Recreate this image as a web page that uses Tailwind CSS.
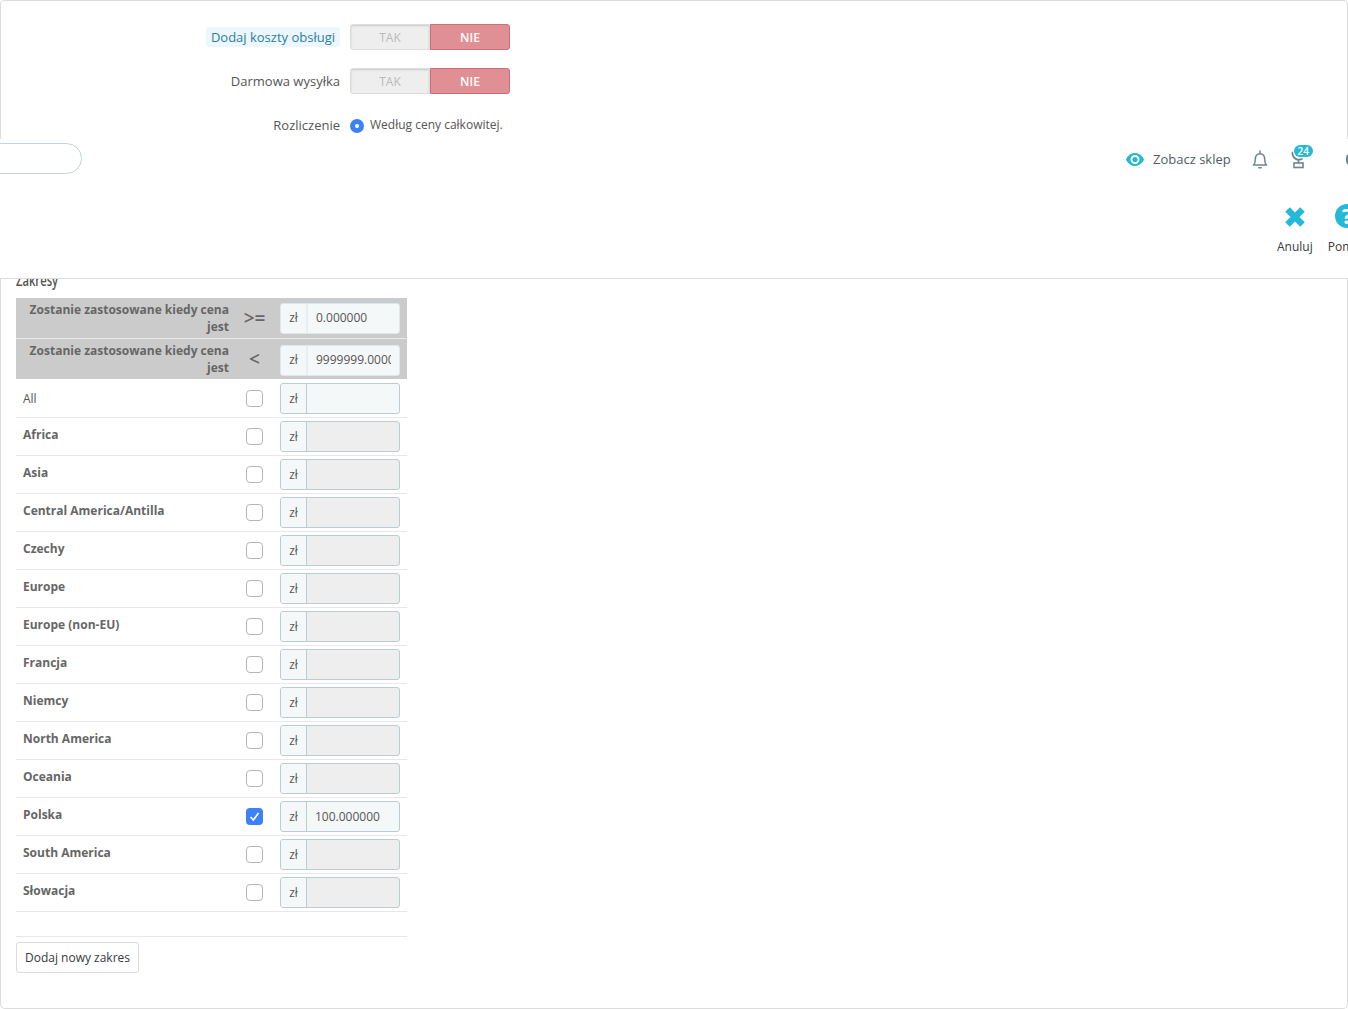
<!doctype html>
<html lang="en">
  <head>
    <title>Zakresy</title>
    <meta charset="UTF-8" />
    <script src="https://cdn.jsdelivr.net/npm/@tailwindcss/browser@4"></script>
  </head>
  <body class="h-[1009px] w-[1348px] overflow-hidden bg-white font-['Open_Sans',sans-serif] text-[#555]">
    <!-- Form, top part -->
    <div class="h-[139px] rounded-t-[5px] border-x border-t border-[#dcdcdc] pt-[22px]">
      <div class="flex h-[28px] items-center">
        <div class="flex w-[339px] justify-end">
          <span class="rounded-[3px] bg-[#ecf6fb] px-[5px] text-[13px] leading-[20px] text-[#2a7fa8]">Dodaj koszty obsługi</span>
        </div>
        <div class="ml-[10px] flex h-[26px] w-[160px] text-[12px] font-semibold">
          <div class="flex w-[80px] items-center justify-center rounded-l-[3px] border border-[#dddddd] bg-[#eeeeee] pt-[2px] font-normal text-[#bbbbbb] shadow-[inset_0_1px_2px_rgba(0,0,0,0.15)]">TAK</div>
          <div class="flex w-[80px] items-center justify-center rounded-r-[3px] border border-[#cd6f76] bg-[#e08f95] pt-[2px] text-white">NIE</div>
        </div>
      </div>
      <div class="mt-[16px] flex h-[28px] items-center">
        <div class="flex w-[339px] justify-end">
          <span class="text-[13px] leading-[20px]">Darmowa wysyłka</span>
        </div>
        <div class="ml-[10px] flex h-[26px] w-[160px] text-[12px] font-semibold">
          <div class="flex w-[80px] items-center justify-center rounded-l-[3px] border border-[#dddddd] bg-[#eeeeee] pt-[2px] font-normal text-[#bbbbbb] shadow-[inset_0_1px_2px_rgba(0,0,0,0.15)]">TAK</div>
          <div class="flex w-[80px] items-center justify-center rounded-r-[3px] border border-[#cd6f76] bg-[#e08f95] pt-[2px] text-white">NIE</div>
        </div>
      </div>
      <div class="mt-[20px] flex items-start">
        <div class="w-[339px] pt-[1px] text-right text-[13px] leading-[18px]">Rozliczenie</div>
        <div class="mt-[4px] ml-[10px] flex size-[14px] items-center justify-center rounded-full bg-[#3b82f6]">
          <div class="size-[4px] rounded-full bg-white"></div>
        </div>
        <span class="ml-[6px] pt-[1px] text-[12px] leading-[18px]">Według ceny całkowitej.</span>
      </div>
    </div>

    <!-- Sticky header over the form -->
    <div class="relative h-[140px] overflow-hidden border-b border-[#dcdcdc] bg-white">
      <div class="mt-[4px] -ml-[20px] h-[31px] w-[102px] rounded-full border border-[#c5d3d8]"></div>
      <div class="absolute top-[10px] left-[1126px] flex w-[240px] items-center">
        <svg class="h-[13px] w-[18px]" viewBox="0 0 18 13"><path fill="#25b9d7" fill-rule="evenodd" d="M9 0C5 0 1.700 2.600 0 6.500 1.700 10.400 5 13 9 13s7.300-2.600 9-6.500C16.300 2.600 13 0 9 0zm0 11a4.500 4.500 0 1 1 0-9 4.500 4.500 0 0 1 0 9z"/><circle cx="9" cy="6.500" r="2.600" fill="#25b9d7"/></svg>
        <span class="ml-[9px] text-[13px] leading-[20px] text-[#4f5d63]">Zobacz sklep</span>
        <svg class="ml-[21px] h-[19px] w-[16px]" viewBox="0 0 16 19" fill="none" stroke="#6c868e" stroke-width="1.5"><path d="M1.500 15c1.500-1.300 1.800-3 1.800-5.500C3.300 6 5 3.700 8 3.700s4.700 2.300 4.700 5.800c0 2.500.3 4.200 1.800 5.500z" stroke-linejoin="round"/><path d="M8 1v2.700M6.800 17.800h2.400" stroke-linecap="round"/></svg>
        <div class="relative ml-[22px] h-[20px] w-[17px]">
          <svg class="h-[20px] w-[17px]" viewBox="0 0 17 20"><path fill="#6c868e" d="M1.800 2.500C.8 7 3.500 11 8 11.500c2 .2 3.700-.4 5-1.500l-1-1c-1 .6-2.200.9-3.500.7C5 9.200 3 6.500 3.200 3z"/><path fill="none" stroke="#6c868e" stroke-width="1.600" d="M8.500 11v3"/><rect x="4" y="14" width="9" height="4.500" fill="none" stroke="#6c868e" stroke-width="1.600"/></svg>
          <span class="absolute -top-[4px] left-[4px] flex h-[12px] w-[19px] items-center justify-center rounded-full bg-[#25b9d7] text-[10px] leading-none font-semibold text-white">24</span>
        </div>
        <div class="ml-[39px] h-[11px] w-[8px] rounded-full border-2 border-[#6c868e]"></div>
      </div>
      <div class="absolute top-[65px] left-[1277px] flex w-[110px] gap-[15px] text-[12px] leading-[18px] text-[#363a41]">
        <div class="flex flex-col items-center">
          <svg class="mb-[10px] h-[24px] w-[24px]" viewBox="0 0 24 24" fill="none" stroke="#25b9d7" stroke-width="6.500"><path d="M4.500 5.500l15 15M19.500 5.500l-15 15"/></svg>
          <span>Anuluj</span>
        </div>
        <div class="flex flex-col items-center">
          <div class="mb-[10px] flex size-[24px] items-center justify-center rounded-full bg-[#25b9d7] text-[21px] leading-none font-bold text-white">?</div>
          <span>Pomoc</span>
        </div>
      </div>
    </div>

    <!-- Form, ranges -->
    <div class="h-[730px] overflow-hidden rounded-b-[5px] border-x border-b border-[#dcdcdc] pl-[15px]">
      <div class="-mt-[9px] h-[28px] origin-left scale-x-[0.7] text-[16px] leading-[20px] font-semibold text-[#555]">Zakresy</div>
      <div class="w-[391px]">
        <div class="flex h-[41px] items-center border-b border-[#e8e8e8] bg-[#cbcbcb]">
          <div class="w-[213px] text-right text-[12px] leading-[17px] font-bold text-[#666]">Zostanie zastosowane kiedy cena jest</div>
          <div class="w-[51px] text-center text-[19px] font-semibold text-[#666]">&gt;=</div>
          <div class="flex h-[31px] w-[120px] overflow-hidden rounded-[3px] border border-[#dbe8ec] bg-[#f5f8f9] text-[12px]">
            <span class="flex w-[27px] shrink-0 items-center justify-center border-r-2 border-[#e6eff2]">zł</span>
            <input class="w-full min-w-0 bg-transparent px-[8px] text-[12px] text-[#555] outline-none" value="0.000000" readonly />
          </div>
        </div>
        <div class="flex h-[40px] items-center bg-[#cbcbcb]">
          <div class="w-[213px] text-right text-[12px] leading-[17px] font-bold text-[#666]">Zostanie zastosowane kiedy cena jest</div>
          <div class="w-[51px] text-center text-[19px] font-semibold text-[#666]">&lt;</div>
          <div class="mt-[2px] flex h-[31px] w-[120px] overflow-hidden rounded-[3px] border border-[#dbe8ec] bg-[#f5f8f9] text-[12px]">
            <span class="flex w-[27px] shrink-0 items-center justify-center border-r-2 border-[#e6eff2]">zł</span>
            <input class="w-full min-w-0 bg-transparent px-[8px] text-[12px] text-[#555] outline-none" value="9999999.000000" readonly />
          </div>
        </div>

        <div class="mt-[1px] flex h-[38px] border-b border-[#e8e8e8]">
          <div class="w-[230px] pt-[10px] pl-[7px] text-[12px] leading-[18px]">All</div>
          <div class="w-[34px] pt-[10px]"><div class="size-[17px] rounded-[4px] border border-[#b5b5b5] bg-white"></div></div>
          <div class="mt-[3px] flex h-[31px] w-[120px] overflow-hidden rounded-[3px] border border-[#bbcdd2] bg-[#f5f8f9] text-[12px]">
            <span class="flex w-[26px] shrink-0 items-center justify-center border-r border-[#bbcdd2]">zł</span>
          </div>
        </div>
        <div class="flex h-[38px] border-b border-[#e8e8e8]">
          <div class="w-[230px] pt-[8px] pl-[7px] text-[12px] leading-[18px] font-bold text-[#666]">Africa</div>
          <div class="w-[34px] pt-[10px]"><div class="size-[17px] rounded-[4px] border border-[#b5b5b5] bg-white"></div></div>
          <div class="mt-[3px] flex h-[31px] w-[120px] overflow-hidden rounded-[3px] border border-[#bbcdd2] bg-[#eeeeee] text-[12px]">
            <span class="flex w-[26px] shrink-0 items-center justify-center border-r border-[#bbcdd2] bg-[#f5f8f9]">zł</span>
          </div>
        </div>
        <div class="flex h-[38px] border-b border-[#e8e8e8]">
          <div class="w-[230px] pt-[8px] pl-[7px] text-[12px] leading-[18px] font-bold text-[#666]">Asia</div>
          <div class="w-[34px] pt-[10px]"><div class="size-[17px] rounded-[4px] border border-[#b5b5b5] bg-white"></div></div>
          <div class="mt-[3px] flex h-[31px] w-[120px] overflow-hidden rounded-[3px] border border-[#bbcdd2] bg-[#eeeeee] text-[12px]">
            <span class="flex w-[26px] shrink-0 items-center justify-center border-r border-[#bbcdd2] bg-[#f5f8f9]">zł</span>
          </div>
        </div>
        <div class="flex h-[38px] border-b border-[#e8e8e8]">
          <div class="w-[230px] pt-[8px] pl-[7px] text-[12px] leading-[18px] font-bold text-[#666]">Central America/Antilla</div>
          <div class="w-[34px] pt-[10px]"><div class="size-[17px] rounded-[4px] border border-[#b5b5b5] bg-white"></div></div>
          <div class="mt-[3px] flex h-[31px] w-[120px] overflow-hidden rounded-[3px] border border-[#bbcdd2] bg-[#eeeeee] text-[12px]">
            <span class="flex w-[26px] shrink-0 items-center justify-center border-r border-[#bbcdd2] bg-[#f5f8f9]">zł</span>
          </div>
        </div>
        <div class="flex h-[38px] border-b border-[#e8e8e8]">
          <div class="w-[230px] pt-[8px] pl-[7px] text-[12px] leading-[18px] font-bold text-[#666]">Czechy</div>
          <div class="w-[34px] pt-[10px]"><div class="size-[17px] rounded-[4px] border border-[#b5b5b5] bg-white"></div></div>
          <div class="mt-[3px] flex h-[31px] w-[120px] overflow-hidden rounded-[3px] border border-[#bbcdd2] bg-[#eeeeee] text-[12px]">
            <span class="flex w-[26px] shrink-0 items-center justify-center border-r border-[#bbcdd2] bg-[#f5f8f9]">zł</span>
          </div>
        </div>
        <div class="flex h-[38px] border-b border-[#e8e8e8]">
          <div class="w-[230px] pt-[8px] pl-[7px] text-[12px] leading-[18px] font-bold text-[#666]">Europe</div>
          <div class="w-[34px] pt-[10px]"><div class="size-[17px] rounded-[4px] border border-[#b5b5b5] bg-white"></div></div>
          <div class="mt-[3px] flex h-[31px] w-[120px] overflow-hidden rounded-[3px] border border-[#bbcdd2] bg-[#eeeeee] text-[12px]">
            <span class="flex w-[26px] shrink-0 items-center justify-center border-r border-[#bbcdd2] bg-[#f5f8f9]">zł</span>
          </div>
        </div>
        <div class="flex h-[38px] border-b border-[#e8e8e8]">
          <div class="w-[230px] pt-[8px] pl-[7px] text-[12px] leading-[18px] font-bold text-[#666]">Europe (non-EU)</div>
          <div class="w-[34px] pt-[10px]"><div class="size-[17px] rounded-[4px] border border-[#b5b5b5] bg-white"></div></div>
          <div class="mt-[3px] flex h-[31px] w-[120px] overflow-hidden rounded-[3px] border border-[#bbcdd2] bg-[#eeeeee] text-[12px]">
            <span class="flex w-[26px] shrink-0 items-center justify-center border-r border-[#bbcdd2] bg-[#f5f8f9]">zł</span>
          </div>
        </div>
        <div class="flex h-[38px] border-b border-[#e8e8e8]">
          <div class="w-[230px] pt-[8px] pl-[7px] text-[12px] leading-[18px] font-bold text-[#666]">Francja</div>
          <div class="w-[34px] pt-[10px]"><div class="size-[17px] rounded-[4px] border border-[#b5b5b5] bg-white"></div></div>
          <div class="mt-[3px] flex h-[31px] w-[120px] overflow-hidden rounded-[3px] border border-[#bbcdd2] bg-[#eeeeee] text-[12px]">
            <span class="flex w-[26px] shrink-0 items-center justify-center border-r border-[#bbcdd2] bg-[#f5f8f9]">zł</span>
          </div>
        </div>
        <div class="flex h-[38px] border-b border-[#e8e8e8]">
          <div class="w-[230px] pt-[8px] pl-[7px] text-[12px] leading-[18px] font-bold text-[#666]">Niemcy</div>
          <div class="w-[34px] pt-[10px]"><div class="size-[17px] rounded-[4px] border border-[#b5b5b5] bg-white"></div></div>
          <div class="mt-[3px] flex h-[31px] w-[120px] overflow-hidden rounded-[3px] border border-[#bbcdd2] bg-[#eeeeee] text-[12px]">
            <span class="flex w-[26px] shrink-0 items-center justify-center border-r border-[#bbcdd2] bg-[#f5f8f9]">zł</span>
          </div>
        </div>
        <div class="flex h-[38px] border-b border-[#e8e8e8]">
          <div class="w-[230px] pt-[8px] pl-[7px] text-[12px] leading-[18px] font-bold text-[#666]">North America</div>
          <div class="w-[34px] pt-[10px]"><div class="size-[17px] rounded-[4px] border border-[#b5b5b5] bg-white"></div></div>
          <div class="mt-[3px] flex h-[31px] w-[120px] overflow-hidden rounded-[3px] border border-[#bbcdd2] bg-[#eeeeee] text-[12px]">
            <span class="flex w-[26px] shrink-0 items-center justify-center border-r border-[#bbcdd2] bg-[#f5f8f9]">zł</span>
          </div>
        </div>
        <div class="flex h-[38px] border-b border-[#e8e8e8]">
          <div class="w-[230px] pt-[8px] pl-[7px] text-[12px] leading-[18px] font-bold text-[#666]">Oceania</div>
          <div class="w-[34px] pt-[10px]"><div class="size-[17px] rounded-[4px] border border-[#b5b5b5] bg-white"></div></div>
          <div class="mt-[3px] flex h-[31px] w-[120px] overflow-hidden rounded-[3px] border border-[#bbcdd2] bg-[#eeeeee] text-[12px]">
            <span class="flex w-[26px] shrink-0 items-center justify-center border-r border-[#bbcdd2] bg-[#f5f8f9]">zł</span>
          </div>
        </div>
        <div class="flex h-[38px] border-b border-[#e8e8e8]">
          <div class="w-[230px] pt-[8px] pl-[7px] text-[12px] leading-[18px] font-bold text-[#666]">Polska</div>
          <div class="w-[34px] pt-[10px]">
            <div class="flex size-[17px] items-center justify-center rounded-[4px] bg-[#3b82f6]">
              <svg class="size-[13px]" viewBox="0 0 13 13" fill="none" stroke="#fff" stroke-width="1.6"><path d="m2.500 7 2.800 3L10.500 3"/></svg>
            </div>
          </div>
          <div class="mt-[3px] flex h-[31px] w-[120px] overflow-hidden rounded-[3px] border border-[#bbcdd2] bg-[#f5f8f9] text-[12px]">
            <span class="flex w-[26px] shrink-0 items-center justify-center border-r border-[#bbcdd2]">zł</span>
            <input class="w-full min-w-0 bg-transparent px-[8px] text-[12px] text-[#555] outline-none" value="100.000000" readonly />
          </div>
        </div>
        <div class="flex h-[38px] border-b border-[#e8e8e8]">
          <div class="w-[230px] pt-[8px] pl-[7px] text-[12px] leading-[18px] font-bold text-[#666]">South America</div>
          <div class="w-[34px] pt-[10px]"><div class="size-[17px] rounded-[4px] border border-[#b5b5b5] bg-white"></div></div>
          <div class="mt-[3px] flex h-[31px] w-[120px] overflow-hidden rounded-[3px] border border-[#bbcdd2] bg-[#eeeeee] text-[12px]">
            <span class="flex w-[26px] shrink-0 items-center justify-center border-r border-[#bbcdd2] bg-[#f5f8f9]">zł</span>
          </div>
        </div>
        <div class="flex h-[38px] border-b border-[#e8e8e8]">
          <div class="w-[230px] pt-[8px] pl-[7px] text-[12px] leading-[18px] font-bold text-[#666]">Słowacja</div>
          <div class="w-[34px] pt-[10px]"><div class="size-[17px] rounded-[4px] border border-[#b5b5b5] bg-white"></div></div>
          <div class="mt-[3px] flex h-[31px] w-[120px] overflow-hidden rounded-[3px] border border-[#bbcdd2] bg-[#eeeeee] text-[12px]">
            <span class="flex w-[26px] shrink-0 items-center justify-center border-r border-[#bbcdd2] bg-[#f5f8f9]">zł</span>
          </div>
        </div>

        <div class="mt-[24px] border-t border-[#e8e8e8] pt-[5px]">
          <button class="h-[31px] w-[123px] rounded-[3px] border border-[#dcdcdc] bg-white text-[12px] text-[#363a41]">Dodaj nowy zakres</button>
        </div>
      </div>
    </div>
  </body>
</html>
